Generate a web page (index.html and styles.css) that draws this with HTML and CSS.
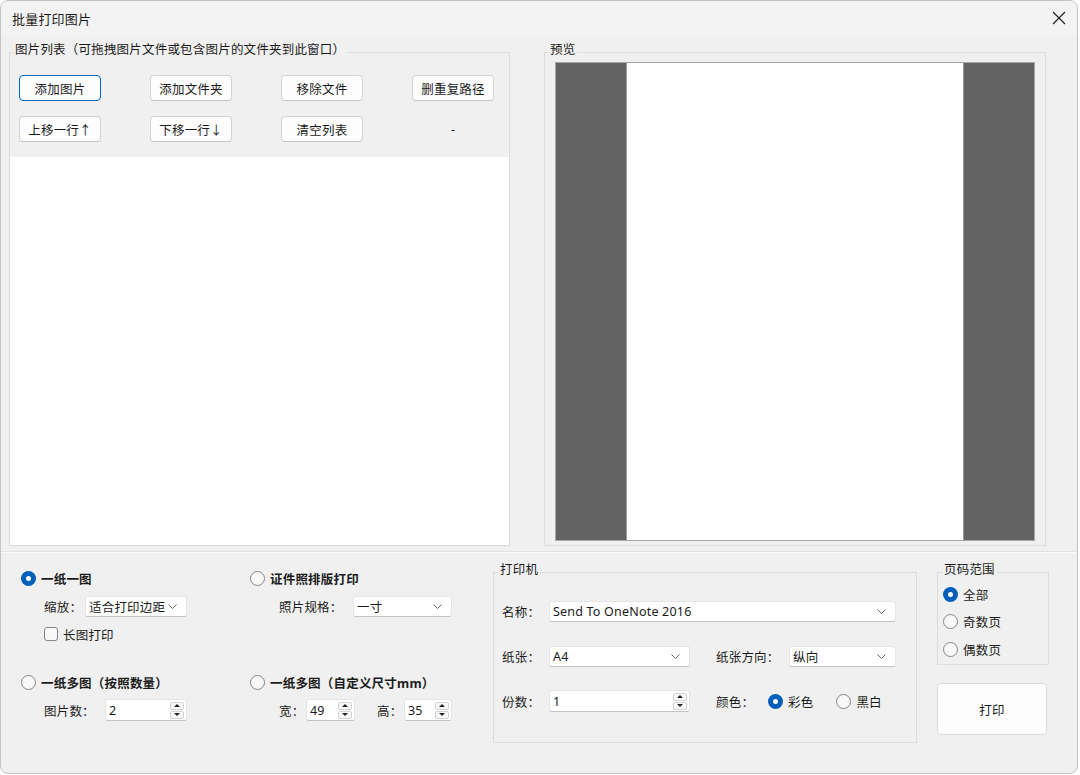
FILE: index.html
```html
<!DOCTYPE html>
<html lang="zh-CN">
<head>
    <meta charset="UTF-8">
    <title>批量打印图片</title>
    <link rel="stylesheet" href="styles.css">
</head>
<body>
<div class="window">
    <div class="titlebar">
        <span class="title">批量打印图片</span>
        <svg class="close" width="14" height="14" viewBox="0 0 14 14"><path d="M1 1L13 13M13 1L1 13" stroke="#1b1b1b" stroke-width="1.1" fill="none"/></svg>
    </div>

    <div class="top">
        <fieldset class="group list-group">
            <legend>图片列表（可拖拽图片文件或包含图片的文件夹到此窗口）</legend>
            <div class="toolbar">
                <button class="btn focus">添加图片</button>
                <button class="btn">添加文件夹</button>
                <button class="btn">移除文件</button>
                <button class="btn">删重复路径</button>
                <button class="btn">上移一行↑</button>
                <button class="btn">下移一行↓</button>
                <button class="btn">清空列表</button>
                <span class="dash">-</span>
            </div>
            <div class="file-list"></div>
        </fieldset>

        <fieldset class="group preview-group">
            <legend>预览</legend>
            <div class="preview"><div class="page"></div></div>
        </fieldset>
    </div>

    <div class="bottom">
        <div class="options">
            <div class="opt">
                <label class="radio-row bold"><span class="radio on"></span>一纸一图</label>
                <div class="sub-row">
                    <span class="lbl w41">缩放：</span>
                    <div class="select w102"><span>适合打印边距</span><svg width="9" height="5" viewBox="0 0 9 5"><path d="M0.5 0.5L4.5 4.5L8.5 0.5" stroke="#666" fill="none"/></svg></div>
                </div>
                <label class="sub-row check-row"><span class="checkbox"></span>长图打印</label>
            </div>
            <div class="opt col2">
                <label class="radio-row bold"><span class="radio"></span>证件照排版打印</label>
                <div class="sub-row">
                    <span class="lbl w74">照片规格：</span>
                    <div class="select w99"><span>一寸</span><svg width="9" height="5" viewBox="0 0 9 5"><path d="M0.5 0.5L4.5 4.5L8.5 0.5" stroke="#666" fill="none"/></svg></div>
                </div>
            </div>
            <div class="opt">
                <label class="radio-row bold"><span class="radio"></span>一纸多图（按照数量）</label>
                <div class="sub-row spin-row">
                    <span class="lbl w61">图片数：</span>
                    <div class="spin w82"><span>2</span><span class="spin-btns"><i class="up"></i><i class="down"></i></span></div>
                </div>
            </div>
            <div class="opt col2">
                <label class="radio-row bold"><span class="radio"></span>一纸多图（自定义尺寸mm）</label>
                <div class="sub-row spin-row">
                    <span class="lbl w27">宽：</span>
                    <div class="spin w49"><span>49</span><span class="spin-btns"><i class="up"></i><i class="down"></i></span></div>
                    <span class="lbl w27 gap-l">高：</span>
                    <div class="spin w48"><span>35</span><span class="spin-btns"><i class="up"></i><i class="down"></i></span></div>
                </div>
            </div>
        </div>

        <fieldset class="group printer">
            <legend>打印机</legend>
            <div class="printer-grid">
                <span class="lbl">名称：</span>
                <div class="select span-all"><span>Send To OneNote 2016</span><svg width="9" height="5" viewBox="0 0 9 5"><path d="M0.5 0.5L4.5 4.5L8.5 0.5" stroke="#666" fill="none"/></svg></div>

                <span class="lbl">纸张：</span>
                <div class="select"><span>A4</span><svg width="9" height="5" viewBox="0 0 9 5"><path d="M0.5 0.5L4.5 4.5L8.5 0.5" stroke="#666" fill="none"/></svg></div>
                <span></span>
                <span class="lbl">纸张方向：</span>
                <div class="select"><span>纵向</span><svg width="9" height="5" viewBox="0 0 9 5"><path d="M0.5 0.5L4.5 4.5L8.5 0.5" stroke="#666" fill="none"/></svg></div>

                <span class="lbl">份数：</span>
                <div class="spin"><span>1</span><span class="spin-btns"><i class="up"></i><i class="down"></i></span></div>
                <span></span>
                <div class="color-row">
                    <span class="lbl w52">颜色：</span>
                    <label class="radio-row"><span class="radio on"></span>彩色</label>
                    <label class="radio-row bw"><span class="radio"></span>黑白</label>
                </div>
            </div>
        </fieldset>

        <div class="side">
            <fieldset class="group pages">
                <legend>页码范围</legend>
                <label class="radio-row"><span class="radio on"></span>全部</label>
                <label class="radio-row"><span class="radio"></span>奇数页</label>
                <label class="radio-row"><span class="radio"></span>偶数页</label>
            </fieldset>
            <button class="btn print-btn">打印</button>
        </div>
    </div>
</div>
</body>
</html>
```

FILE: styles.css
```css
* {
    box-sizing: border-box;
}

body {
    margin: 0;
    background: #fff;
    font-family: "Noto Sans", "Noto Sans CJK SC", sans-serif;
    font-size: 12.5px;
    letter-spacing: 0.2px;
    color: #1b1b1b;
}

.window {
    width: 1078px;
    height: 774px;
    border: 1px solid #c4c4c4;
    border-radius: 8px;
    background: #f0f0f0;
    display: flex;
    flex-direction: column;
    overflow: hidden;
}

.titlebar {
    height: 34px;
    flex: none;
    background: #f3f3f3;
    display: flex;
    align-items: center;
    justify-content: space-between;
    padding: 0 11px 0 11px;
    font-size: 13px;
}

/* group boxes */
.group {
    margin: 0;
    padding: 0;
    min-width: 0;
    border: 1px solid #dcdcdc;
}

.group legend {
    margin-left: 3px;
    padding: 0 2px 4px;
    line-height: 16px;
}

.top {
    display: flex;
    gap: 34px;
    height: 516px;
    flex: none;
    padding: 7px 0 5px 8px;
}

.list-group {
    width: 501px;
    height: 504px;
    display: flex;
    flex-direction: column;
}

.toolbar {
    display: grid;
    grid-template-columns: repeat(4, 82px);
    column-gap: 49px;
    row-gap: 15px;
    padding: 13px 0 15px 9px;
}

.btn {
    height: 26px;
    padding: 0;
    border: 1px solid #d3d3d3;
    border-bottom-color: #c4c4c4;
    border-radius: 4px;
    background: #fdfdfd;
    font: inherit;
    letter-spacing: inherit;
    color: inherit;
}

.btn.focus {
    border-color: #0067c0;
}

.dash {
    align-self: center;
    text-align: center;
}

.file-list {
    flex: 1;
    background: #fff;
}

.preview-group {
    width: 502px;
    height: 504px;
    padding: 0 10px 4px 10px;
}

.preview-group legend {
    margin-left: -7px;
}

.preview {
    height: 479px;
    background: #636363;
    border: 1px solid #a6a6a6;
    display: flex;
    justify-content: center;
}

.page {
    width: 338px;
    background: #fff;
    border-left: 1px solid #9a9a9a;
    border-right: 1px solid #9a9a9a;
}

/* bottom panel */
.bottom {
    flex: 1;
    display: flex;
    border-top: 1px solid #e2e2e2;
    box-shadow: inset 0 1px #fafafa;
    padding: 10px 0 0 20px;
}

.options {
    width: 472px;
    flex: none;
    display: grid;
    grid-template-columns: 229px 1fr;
    grid-template-rows: 104px auto;
    padding-top: 6px;
}

.radio-row {
    display: flex;
    align-items: center;
    gap: 5px;
    height: 20px;
    flex: none;
    white-space: nowrap;
}

.bold {
    font-weight: bold;
}

.radio {
    width: 15px;
    height: 15px;
    flex: none;
    border-radius: 50%;
    border: 1px solid #858585;
    background: #f8f8f8;
}

.radio.on {
    border: none;
    background: #005fb8;
}

.radio.on::after {
    content: '';
    display: block;
    width: 5px;
    height: 5px;
    margin: 5px;
    border-radius: 50%;
    background: #fff;
}

.sub-row {
    display: flex;
    align-items: center;
    padding-left: 23px;
    margin-top: 8px;
}

.col2 .sub-row {
    padding-left: 29px;
}

.check-row {
    height: 20px;
    margin-top: 7px;
    gap: 5px;
}

.spin-row {
    margin-top: 7px;
}

.checkbox {
    width: 14px;
    height: 14px;
    border: 1px solid #858585;
    border-radius: 3px;
    background: #f8f8f8;
}

.lbl {
    flex: none;
    white-space: nowrap;
}

.w27 { width: 27px; }
.w41 { width: 41px; }
.w52 { width: 52px; }
.w61 { width: 61px; }
.w74 { width: 74px; }

.gap-l {
    margin-left: 22px;
}

.select,
.spin {
    height: 21px;
    display: flex;
    align-items: center;
    justify-content: space-between;
    background: #fff;
    border: 1px solid #e4e4e4;
    border-bottom-color: #c2c2c2;
    border-radius: 3px;
    white-space: nowrap;
}

.select {
    padding: 0 9px 0 3px;
}

.spin {
    height: 22px;
    padding: 0 2px 0 3px;
}

.w48 { width: 48px; }
.w49 { width: 49px; }
.w82 { width: 82px; }
.w99 { width: 99px; }
.w102 { width: 102px; }

.spin-btns {
    display: flex;
    flex-direction: column;
    gap: 1px;
}

.spin-btns i {
    width: 14px;
    height: 8px;
    border: 1px solid #d2d2d2;
    border-radius: 2px;
    background: #fafafa;
    display: flex;
    align-items: center;
    justify-content: center;
}

.spin-btns i::before {
    content: '';
    border-left: 3px solid transparent;
    border-right: 3px solid transparent;
}

.spin-btns .up::before {
    border-bottom: 3px solid #222;
}

.spin-btns .down::before {
    border-top: 3px solid #222;
}

/* printer */
.printer {
    width: 424px;
    height: 181px;
    flex: none;
    padding: 18px 0 0 8px;
}

.printer legend {
    margin-left: -4px;
}

.printer-grid {
    display: grid;
    grid-template-columns: 47px 141px 26px 73px 107px;
    grid-auto-rows: 22px;
    row-gap: 23px;
    align-items: center;
}

.span-all {
    grid-column: 2 / 6;
}

.color-row {
    grid-column: 4 / 6;
    display: flex;
    align-items: center;
}

.bw {
    margin-left: 23px;
}

/* right column */
.side {
    margin-left: 20px;
    display: flex;
    flex-direction: column;
    gap: 18px;
}

.pages {
    width: 112px;
    height: 103px;
    padding: 2px 0 0 5px;
    display: flex;
    flex-direction: column;
    gap: 7.5px;
}

.pages legend {
    margin-left: -1px;
}

.print-btn {
    width: 110px;
    height: 52px;
    border-color: #dadada;
}
```
